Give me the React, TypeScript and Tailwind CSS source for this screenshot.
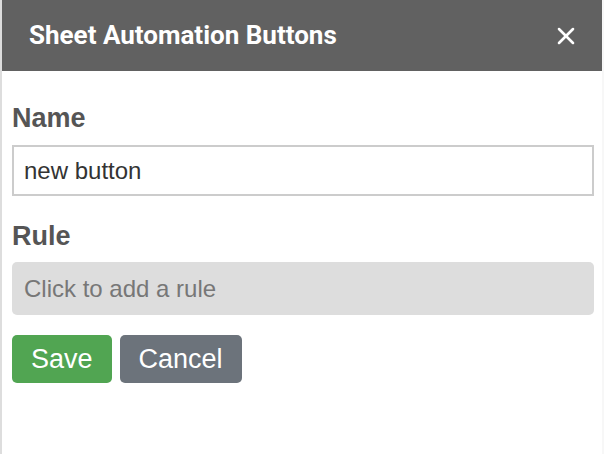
import { X } from 'lucide-react'

const App = () => {
  return (
    <div className="w-[604px] h-[454px] bg-white border-l-2 border-r-2 border-l-[#dddddd] border-r-[#f7f7f7] flex flex-col font-['Liberation_Sans',Arial,sans-serif]">
      <div className="h-[71px] bg-[#616161] flex items-center justify-between pl-[27px] pr-[22px] shrink-0">
        <h1 className="text-white text-[26px] font-bold font-['Roboto',sans-serif]">Sheet Automation Buttons</h1>
        <X className="w-[28px] h-[28px] text-white" strokeWidth={2.2} />
      </div>
      <div className="flex flex-col pl-[10px] pr-[8px]">
        <label className="mt-[31px] text-[27px] leading-[32px] font-bold text-[#555555]">Name</label>
        <input
          className="mt-[11px] h-[51px] border-2 border-[#cccccc] px-[10px] text-[24px] text-[#333333] outline-none"
          defaultValue="new button"
        />
        <label className="mt-[24px] text-[27px] leading-[32px] font-bold text-[#555555]">Rule</label>
        <div className="mt-[10px] h-[53px] bg-[#dddddd] rounded-[5px] flex items-center px-[12px] text-[24px] text-[#777777] cursor-pointer">
          Click to add a rule
        </div>
        <div className="mt-[20px] flex gap-[8px]">
          <button className="h-[48px] px-[19px] bg-[#51a552] text-white text-[27px] rounded-[5px]">Save</button>
          <button className="h-[48px] px-[19px] bg-[#6c737b] text-white text-[27px] rounded-[5px]">Cancel</button>
        </div>
      </div>
    </div>
  )
}

export default App
